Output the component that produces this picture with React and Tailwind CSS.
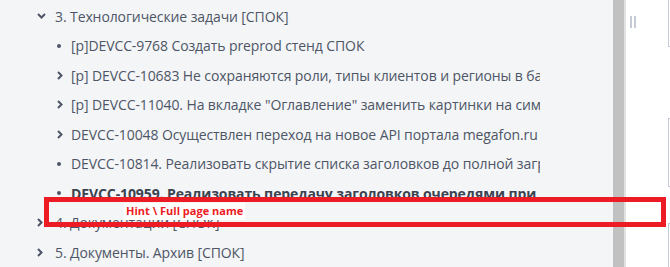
import React from "react";

const rows = [
  { level: 1, icon: "down", text: "3. Технологические задачи [СПОК]" },
  { level: 2, icon: "dot", text: "[p]DEVCC-9768 Создать preprod стенд СПОК" },
  { level: 2, icon: "right", text: "[p] DEVCC-10683 Не сохраняются роли, типы клиентов и регионы в базе" },
  { level: 2, icon: "right", text: "[p] DEVCC-11040. На вкладке \"Оглавление\" заменить картинки на символы" },
  { level: 2, icon: "right", text: "DEVCC-10048 Осуществлен переход на новое API портала megafon.ru по" },
  { level: 2, icon: "dot", text: "DEVCC-10814. Реализовать скрытие списка заголовков до полной загрузки" },
  { level: 2, icon: "dot", text: "DEVCC-10959. Реализовать передачу заголовков очередями при загрузке", bold: true },
  { level: 1, icon: "right", text: "4. Документации [СПОК]" },
  { level: 1, icon: "right", text: "5. Документы. Архив [СПОК]" },
];

function Icon({ type }) {
  if (type === "dot") {
    return <span className="block w-[4px] h-[4px] rounded-full bg-[#4d5566]" />;
  }
  if (type === "down") {
    return (
      <svg width="9" height="6" viewBox="0 0 9 6" className="block">
        <path d="M1 1 L4.5 4.5 L8 1" fill="none" stroke="#4d5566" strokeWidth="2" />
      </svg>
    );
  }
  return (
    <svg width="6" height="9" viewBox="0 0 6 9" className="block">
      <path d="M1 1 L4.5 4.5 L1 8" fill="none" stroke="#4d5566" strokeWidth="2" />
    </svg>
  );
}

function Row({ row }) {
  const isTop = row.level === 1;
  return (
    <div className={`h-[29.5px] flex items-center ${isTop ? "pl-[37px]" : "pl-[57px]"}`}>
      <span className={`shrink-0 flex items-center ${isTop ? "w-[18px]" : "w-[14px]"}`}>
        <Icon type={row.icon} />
      </span>
      <span
        className={`shrink-0 whitespace-nowrap text-[14px] tracking-[-0.1px] ${
          row.bold ? "font-bold text-[#3b4250]" : "text-[#4d5566]"
        }`}
      >
        {row.text}
      </span>
    </div>
  );
}

export default function App() {
  return (
    <div className="relative w-[670px] h-[267px] overflow-hidden bg-white flex font-['Open_Sans',sans-serif]">
      <div className="w-[613px] h-full bg-[#f4f5f7]">
        <div className="w-[540px] overflow-hidden pt-[1.5px]">
          {rows.map((row, i) => (
            <Row key={i} row={row} />
          ))}
        </div>
      </div>

      <div className="w-[11px] h-full bg-[#c1c1c1]" />
      <div className="w-[2px] h-full bg-[#e2e2e2]" />

      <div className="flex-1 flex">
        <div className="w-[42px] pt-[16px] pl-[4px]">
          <div className="flex gap-[2px]">
            <span className="block w-[2px] h-[12px] bg-[#c5cbd6]" />
            <span className="block w-[2px] h-[12px] bg-[#c5cbd6]" />
          </div>
        </div>
        <div className="flex-1 flex flex-col">
          <div className="h-[47px] border-l border-b border-[#c5cad8]" />
          <div className="mt-[71px] h-[69px] border-l border-t border-b border-[#c5cad8]" />
          <div className="mt-[36px] flex-1 border-l border-t border-[#c5cad8]" />
        </div>
      </div>

      <div className="absolute left-[44px] top-[197px] w-[622px] h-[30px] border-[5px] border-[#ed1c24]">
        <span className="absolute left-[75px] top-[1px] bg-white px-[2px] h-[17px] flex items-center text-[11px] font-bold text-[#ed1c24]">
          Hint \ Full page name
        </span>
      </div>
    </div>
  );
}
